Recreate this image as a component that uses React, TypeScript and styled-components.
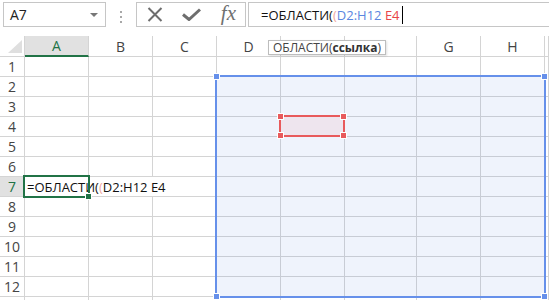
import React from 'react';
import styled, { createGlobalStyle } from 'styled-components';

const Global = createGlobalStyle`
  html, body { margin: 0; padding: 0; background: #fff; overflow: hidden; }
  body { font-family: "Open Sans", "Liberation Sans", sans-serif; }
`;

const Page = styled.div`
  width: 549px;
  height: 300px;
  overflow: hidden;
  background: #fff;
`;

const Toolbar = styled.div`
  display: flex;
  align-items: flex-start;
  height: 36px;
  padding: 2px 0 0 3px;
  box-sizing: border-box;
`;

const NameBox = styled.div`
  width: 103px;
  height: 25px;
  box-sizing: border-box;
  border: 1px solid #c6c6c6;
  display: flex;
  align-items: center;
  justify-content: space-between;
  padding: 0 7px 0 6px;
  font-size: 14px;
  color: #222;
`;

const DropArrow = styled.span`
  width: 0;
  height: 0;
  border-left: 4px solid transparent;
  border-right: 4px solid transparent;
  border-top: 4px solid #777;
  margin-top: 1px;
`;

const Grip = styled.div`
  display: flex;
  flex-direction: column;
  gap: 3px;
  margin: 9px 14px 0 14px;
`;

const GripDot = styled.span`
  width: 2px;
  height: 2px;
  background: #a8a8a8;
`;

const ButtonGroup = styled.div`
  width: 110px;
  height: 25px;
  box-sizing: border-box;
  border: 1px solid #c6c6c6;
  display: flex;
  align-items: center;
  justify-content: space-between;
  padding: 0 9px 0 10px;
`;

const Fx = styled.span`
  font-family: "Liberation Serif", "DejaVu Serif", serif;
  font-style: italic;
  font-size: 21px;
  color: #707070;
  line-height: 1;
  margin-top: -2px;
`;

const FormulaBox = styled.div`
  flex: 1;
  height: 25px;
  margin-left: 2px;
  box-sizing: border-box;
  border: 1px solid #c6c6c6;
  border-right: none;
  display: flex;
  align-items: center;
  padding-left: 12px;
  font-size: 13px;
  color: #111;
  white-space: pre;
`;

const Ref = styled.span<{ $c: string }>`
  color: ${(p) => p.$c};
`;

const Caret = styled.span`
  display: inline-block;
  width: 1px;
  height: 18px;
  background: #000;
  margin-left: 2px;
`;

const SheetWrap = styled.div`
  position: relative;
`;

const Sheet = styled.div`
  display: grid;
  grid-template-columns: 25px 64px 64px 64px 64px 64px 72px 64px 64px 1fr;
  grid-template-rows: 21px;
  grid-auto-rows: 20px;
  font-size: 14px;
`;

const Cell = styled.div`
  box-sizing: border-box;
  border-right: 1px solid #d4d4d4;
  border-bottom: 1px solid #d4d4d4;
  background: #fff;
`;

const Corner = styled(Cell)`
  position: relative;
  &::after {
    content: '';
    position: absolute;
    right: 2px;
    bottom: 3px;
    width: 0;
    height: 0;
    border-left: 14px solid transparent;
    border-bottom: 13px solid #dfdfdf;
  }
`;

const ColHead = styled(Cell)<{ $sel?: boolean }>`
  display: flex;
  align-items: center;
  justify-content: center;
  color: ${(p) => (p.$sel ? '#217346' : '#444')};
  background: ${(p) => (p.$sel ? '#e1e1e1' : '#fff')};
  border-bottom: ${(p) => (p.$sel ? '2px solid #217346' : '1px solid #d4d4d4')};
`;

const RowHead = styled(Cell)<{ $sel?: boolean }>`
  display: flex;
  align-items: center;
  justify-content: center;
  color: ${(p) => (p.$sel ? '#217346' : '#444')};
  background: ${(p) => (p.$sel ? '#e1e1e1' : '#fff')};
`;

const ActiveCell = styled(Cell)`
  position: relative;
  z-index: 2;
`;

const Editor = styled.div`
  position: absolute;
  left: 0;
  top: 0;
  width: 191px;
  height: 19px;
  background: #fff;
  display: flex;
  align-items: center;
  padding-left: 2px;
  box-sizing: border-box;
  white-space: pre;
  font-size: 13px;
  color: #111;
`;

const SelBox = styled.div`
  position: absolute;
  left: -2px;
  top: -2px;
  width: 67px;
  height: 23px;
  box-sizing: border-box;
  border: 2px solid #217346;
`;

const Handle = styled.span<{ $c: string; $pos: string }>`
  position: absolute;
  width: 7px;
  height: 7px;
  box-sizing: border-box;
  border: 1px solid #fff;
  background: ${(p) => p.$c};
  ${(p) => p.$pos}
`;

const Range = styled.div<{ $c: string; $fill: string }>`
  position: absolute;
  box-sizing: border-box;
  border: 2px solid ${(p) => p.$c};
  background: ${(p) => p.$fill};
  z-index: 3;
`;

const Tooltip = styled.div`
  position: absolute;
  left: 268px;
  top: 4px;
  height: 15px;
  box-sizing: border-box;
  padding: 0 4px 0 4px;
  border: 1px solid #bdbdbd;
  background: #fff;
  box-shadow: 1px 1px 2px rgba(0, 0, 0, 0.12);
  font-size: 12px;
  line-height: 13px;
  color: #444;
  white-space: nowrap;
  z-index: 5;
`;

const Bold = styled.b`
  font-weight: 700;
  color: #333;
`;

const cols = ['A', 'B', 'C', 'D', 'E', 'F', 'G', 'H', ''];
const rows = [1, 2, 3, 4, 5, 6, 7, 8, 9, 10, 11, 12, 13];

const corners = (c: string) => (
  <>
    <Handle $c={c} $pos="left:-4px;top:-4px;" />
    <Handle $c={c} $pos="right:-4px;top:-4px;" />
    <Handle $c={c} $pos="left:-4px;bottom:-4px;" />
    <Handle $c={c} $pos="right:-4px;bottom:-4px;" />
  </>
);

const FormulaText = ({ plain }: { plain?: boolean }) => (
  <span>
    =ОБЛАСТИ(<Ref $c="#f0a8a0">(</Ref>
    <Ref $c={plain ? '#111' : '#5b86e0'}>D2:H12</Ref>{' '}
    <Ref $c={plain ? '#111' : '#e8454a'}>E4</Ref>
  </span>
);

export default function App() {
  return (
    <Page>
      <Global />
      <Toolbar>
        <NameBox>
          <span>A7</span>
          <DropArrow />
        </NameBox>
        <Grip>
          <GripDot />
          <GripDot />
          <GripDot />
        </Grip>
        <ButtonGroup>
          <svg width="16" height="15" viewBox="0 0 16 15">
            <path d="M1.5 1 L14.5 14 M14.5 1 L1.5 14" stroke="#6e6e6e" strokeWidth="2" fill="none" />
          </svg>
          <svg width="19" height="13" viewBox="0 0 19 13">
            <path d="M1 6.5 L7 11.5 L18 1.5" stroke="#6e6e6e" strokeWidth="3" fill="none" />
          </svg>
          <Fx>fx</Fx>
        </ButtonGroup>
        <FormulaBox>
          <FormulaText />
          <Caret />
        </FormulaBox>
      </Toolbar>
      <SheetWrap>
        <Sheet>
          <Corner />
          {cols.map((c, i) => (
            <ColHead key={i} $sel={c === 'A'}>
              {c}
            </ColHead>
          ))}
          {rows.map((r) => (
            <React.Fragment key={r}>
              <RowHead $sel={r === 7}>{r < 13 ? r : ''}</RowHead>
              {cols.map((c, i) =>
                r === 7 && c === 'A' ? (
                  <ActiveCell key={i}>
                    <Editor>
                      <FormulaText plain />
                    </Editor>
                    <SelBox>
                      <Handle $c="#217346" $pos="right:-4px;bottom:-4px;" />
                    </SelBox>
                  </ActiveCell>
                ) : (
                  <Cell key={i} />
                )
              )}
            </React.Fragment>
          ))}
        </Sheet>
        <Range $c="#6690ea" $fill="rgba(106,145,232,0.11)" style={{ left: 215, top: 39, width: 331, height: 223 }}>
          {corners('#6690ea')}
        </Range>
        <Range $c="#e85a5c" $fill="rgba(232,90,95,0.09)" style={{ left: 279, top: 79, width: 66, height: 22 }}>
          {corners('#e85a5c')}
        </Range>
        <Tooltip>
          ОБЛАСТИ(<Bold>ссылка</Bold>)
        </Tooltip>
      </SheetWrap>
    </Page>
  );
}
